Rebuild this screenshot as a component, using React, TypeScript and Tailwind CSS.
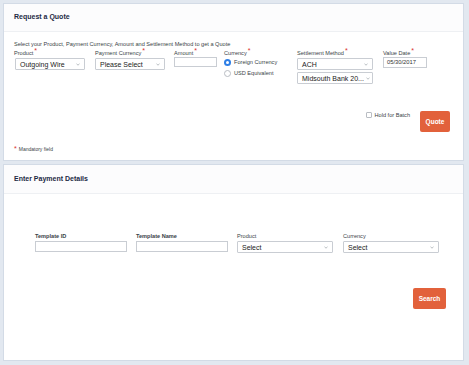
import React from 'react';

const font = { fontFamily: '"Liberation Sans", Arial, sans-serif' };

function Chevron() {
  return (
    <svg width="4" height="3" viewBox="0 0 4 3" className="shrink-0">
      <path d="M0.5 0.8 L2 2.2 L3.5 0.8" fill="none" stroke="#9aa0a8" strokeWidth="0.7" />
    </svg>
  );
}

function Select({ value, width }: { value: string; width: string }) {
  return (
    <div
      className={`${width} h-[12px] flex items-center justify-between gap-[2px] pl-[4px] pr-[4px] border border-[#c9cdd3] rounded-[1px] bg-white text-[7px] leading-none text-[#222]`}
    >
      <span className="whitespace-nowrap">{value}</span>
      <Chevron />
    </div>
  );
}

function Label({ text, req, bold }: { text: string; req?: boolean; bold?: boolean }) {
  return (
    <div className={`h-[8px] text-[5.6px] leading-[8px] text-[#3a3f47] whitespace-nowrap ${bold ? 'font-bold' : ''}`}>
      {text}
      {req && <span className="text-[#d9302c] text-[7px] relative top-[-2px] ml-[1px]">*</span>}
    </div>
  );
}

function Radio({ checked, text }: { checked?: boolean; text: string }) {
  return (
    <div className="flex items-center h-[9px] gap-[3px]">
      {checked ? (
        <span className="w-[7px] h-[7px] rounded-full bg-[#2f7fe6] flex items-center justify-center">
          <span className="w-[3px] h-[3px] rounded-full bg-white" />
        </span>
      ) : (
        <span className="w-[7px] h-[7px] rounded-full border border-[#b9bdc3] bg-white" />
      )}
      <span className="text-[5.6px] text-[#3a3f47] whitespace-nowrap">{text}</span>
    </div>
  );
}

export default function App() {
  return (
    <div style={font} className="w-[469px] h-[365px] bg-[#e2e8f0] p-[3px] flex flex-col gap-[3px] overflow-hidden">
      {/* Request a Quote */}
      <div className="w-[461px] h-[158px] bg-white border border-[#d3dbe6] flex flex-col">
        <div className="h-[28px] flex items-center pl-[10px] border-b border-[#eef0f3] bg-[#fcfcfd]">
          <span className="text-[7px] font-bold text-[#1d2a44]">Request a Quote</span>
        </div>
        <div className="pl-[10px] pr-[12px] flex flex-col">
          <p className="mt-[8px] h-[8px] text-[5.6px] leading-[8px] text-[#3a3f47] whitespace-nowrap">
            Select your Product, Payment Currency, Amount and Settlement Method to get a Quote
          </p>
          <div className="mt-[1px] flex h-[35px]">
            <div className="w-[81px] flex flex-col gap-[1px]">
              <Label text="Product" req />
              <div className="pl-[1px]">
                <Select value="Outgoing Wire" width="w-[70px]" />
              </div>
            </div>
            <div className="w-[79px] flex flex-col gap-[1px]">
              <Label text="Payment Currency" req />
              <Select value="Please Select" width="w-[70px]" />
            </div>
            <div className="w-[50px] flex flex-col gap-0">
              <Label text="Amount" req />
              <div className="w-[43px] h-[10px] border border-[#c9cdd3] bg-white" />
            </div>
            <div className="w-[73px] flex flex-col">
              <Label text="Currency" req />
              <div className="mt-[1px] flex flex-col gap-[2px]">
                <Radio checked text="Foreign Currency" />
                <Radio text="USD Equivalent" />
              </div>
            </div>
            <div className="w-[86px] flex flex-col gap-[1px]">
              <Label text="Settlement Method" req />
              <Select value="ACH" width="w-[76px]" />
              <div className="mt-[1px]">
                <Select value="Midsouth Bank 20..." width="w-[76px]" />
              </div>
            </div>
            <div className="flex flex-col">
              <Label text="Value Date" req />
              <div className="w-[44px] h-[11px] border border-[#c9cdd3] bg-white flex items-center pl-[3px] text-[5.8px] text-[#333]">
                05/30/2017
              </div>
            </div>
          </div>
          <div className="mt-[27px] flex justify-end items-start pr-[1px]">
            <div className="flex items-center h-[8px] gap-[3px] mr-[10px]">
              <span className="w-[6px] h-[6px] border border-[#b9bdc3] rounded-[1px] bg-white" />
              <span className="text-[5.6px] text-[#3a3f47]">Hold for Batch</span>
            </div>
            <button className="w-[30px] h-[21px] bg-[#e2613b] rounded-[2px] text-white text-[6.5px] font-bold flex items-center justify-center">
              Quote
            </button>
          </div>
          <div className="mt-[14px] h-[8px] flex items-center text-[5px] text-[#3a3f47]">
            <span className="text-[#d9302c] text-[7px] relative top-[-1px] mr-[2px]">*</span>
            Mandatory field
          </div>
        </div>
      </div>

      {/* Enter Payment Details */}
      <div className="w-[461px] h-[197px] bg-white border border-[#d3dbe6] flex flex-col">
        <div className="h-[29px] flex items-center pl-[10px] border-b border-[#eef0f3] bg-[#fcfcfd]">
          <span className="text-[7px] font-bold text-[#1d2a44]">Enter Payment Details</span>
        </div>
        <div className="pl-[31px] pr-[17px] flex flex-col">
          <div className="mt-[38px] flex">
            <div className="w-[101px] flex flex-col gap-[1px]">
              <Label text="Template ID" bold />
              <div className="w-[92px] h-[11px] border border-[#c9cdd3] bg-white" />
            </div>
            <div className="w-[101px] flex flex-col gap-[1px]">
              <Label text="Template Name" bold />
              <div className="w-[92px] h-[11px] border border-[#c9cdd3] bg-white" />
            </div>
            <div className="w-[106px] flex flex-col gap-[1px]">
              <Label text="Product" />
              <Select value="Select" width="w-[96px]" />
            </div>
            <div className="flex flex-col gap-[1px]">
              <Label text="Currency" />
              <Select value="Select" width="w-[96px]" />
            </div>
          </div>
          <div className="mt-[35px] flex justify-end">
            <button className="w-[33px] h-[21px] bg-[#e2613b] rounded-[2px] text-white text-[6.5px] font-bold flex items-center justify-center">
              Search
            </button>
          </div>
        </div>
      </div>
    </div>
  );
}
